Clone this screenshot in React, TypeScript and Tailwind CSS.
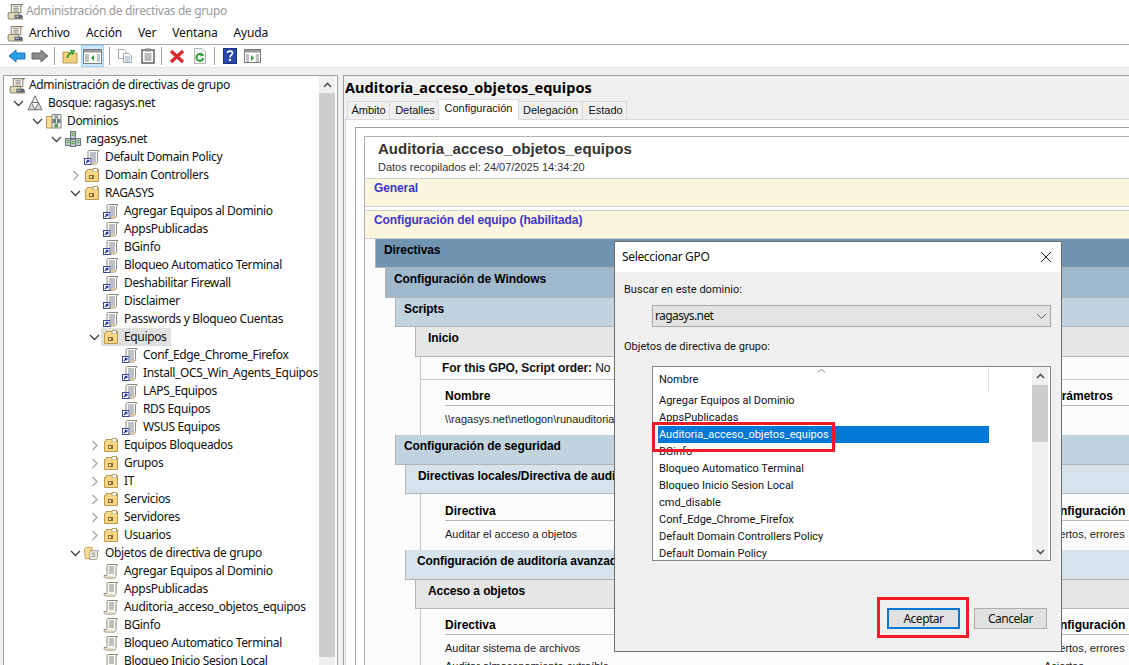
import React from "react";

function GpoLink() {
  return (
    <svg width="16" height="16" viewBox="0 0 16 16" className="shrink-0">
      <path d="M5.5 1.5H15L13.5 3.5V12.5C13.5 14 12.5 15 11.5 15H4V3C4 2 4.5 1.5 5.5 1.5Z" fill="#fdfcf8" stroke="#8d8a7c" />
      <path d="M6 4H12M6 6H12M6 8H12M8 10H12M8 12H12" stroke="#7d8593" />
      <path d="M8 13H13V14.5L11.5 15H8Z" fill="#d8c89a" />
      <rect x="0.5" y="9.5" width="6.5" height="6" fill="#fff" stroke="#3f4a96" />
      <path d="M2 14L4.5 11.5M2.8 11.3H4.8V13.3" stroke="#2433a8" fill="none" strokeWidth="1.2" />
    </svg>
  );
}
function Ou() {
  return (
    <svg width="16" height="16" viewBox="0 0 16 16" className="shrink-0">
      <path d="M1.5 4.5H3V2.5H14.5V14.5H1.5Z" fill="#f8dc90" stroke="#bc9a56" />
      <path d="M9 1.5H13.5V5H9Z" fill="#fff" stroke="#b59a66" />
      <rect x="2" y="5" width="12" height="9" fill="#f6d583" />
      <rect x="5" y="8" width="5" height="4" fill="#8a6a2c" />
      <rect x="6" y="9" width="2" height="2" fill="#f3e3b0" />
    </svg>
  );
}
function Script() {
  return (
    <svg width="16" height="16" viewBox="0 0 16 16" className="shrink-0">
      <path d="M5 1.5H14.5L13 3.5V12.5C13 14 12 15 11 15H2.5C1.5 15 1 14 1 12.5H3.5C4 12 4 11 4 9V3C4 2 4.3 1.5 5 1.5Z" fill="#fbfaf4" stroke="#8b8675" />
      <path d="M6 4H11M6 6H11M6 8H11M6 10H11" stroke="#848484" />
      <path d="M1.5 13H10V14.5H3Z" fill="#e6dcc0" />
    </svg>
  );
}
function Root() {
  return (
    <svg width="17" height="17" viewBox="0 0 16 16" className="shrink-0">
      <path d="M4 1.5H14.5L13 3V9H4Z" fill="#fbf8ea" stroke="#8b8675" />
      <path d="M6 3.5H11M6 5.5H11M6 7.5H11" stroke="#848484" />
      <path d="M1 11C1 9.5 2 9 3 9H11V12.5H14.5V15H2C1.3 15 1 14 1 13Z" fill="#e3d8b4" stroke="#8b8675" />
      <rect x="7" y="11" width="7" height="3.5" fill="#59626e" />
      <rect x="8" y="12" width="3" height="1" fill="#c4d4de" />
    </svg>
  );
}
function Forest() {
  return (
    <svg width="16" height="16" viewBox="0 0 16 16" className="shrink-0">
      <path d="M8 0.8L11.2 7.5H4.8Z" fill="#f3f3f3" stroke="#6f6f6f" />
      <path d="M4.5 7.7L8 14.8H1Z" fill="#d8d8d8" stroke="#6f6f6f" />
      <path d="M11.5 7.7L15 14.8H8Z" fill="#d8d8d8" stroke="#6f6f6f" />
    </svg>
  );
}
function Server({ x, y }: { x: number; y: number }) {
  return (
    <g>
      <rect x={x + 0.5} y={y + 0.5} width="5" height="7" fill="#c3cad0" stroke="#6c7a80" />
      <path d={`M${x + 1.5} ${y + 2.5}H${x + 4.5}M${x + 1.5} ${y + 4.5}H${x + 4.5}`} stroke="#56a24a" />
    </g>
  );
}
function Domain() {
  return (
    <svg width="16" height="16" viewBox="0 0 16 16" className="shrink-0">
      <Server x={5} y={0} />
      <Server x={0} y={7} />
      <Server x={10} y={7} />
      <Server x={5} y={8} />
    </svg>
  );
}
function Dominios() {
  return (
    <svg width="16" height="16" viewBox="0 0 16 16" className="shrink-0">
      <path d="M0.5 3.5H7V15H0.5Z" fill="#f8dc90" stroke="#bc9a56" />
      <path d="M6 1.5H15V15H6Z" fill="#e9e9e3" stroke="#808a8c" />
      <rect x="6.5" y="6" width="3.5" height="4" fill="#6d7b82" />
      <rect x="11" y="6" width="3.5" height="4" fill="#6d7b82" />
      <rect x="8.5" y="10.5" width="3.5" height="4" fill="#5c9c60" />
      <rect x="8.5" y="2.5" width="3.5" height="3" fill="#8c979c" />
    </svg>
  );
}
function GpoFolder() {
  return (
    <svg width="16" height="16" viewBox="0 0 18 16" className="shrink-0">
      <path d="M0.5 3.5L3 1.5H9V14.5H1.5Z" fill="#f8dc90" stroke="#bc9a56" />
      <path d="M7.5 5.5H16.5L15 7V13C15 14 14.5 15 13.5 15H6.5V7C6.5 6 7 5.5 7.5 5.5Z" fill="#fbfaf4" stroke="#8b8675" />
      <path d="M8.5 8H13M8.5 10H13M8.5 12H13" stroke="#848484" />
    </svg>
  );
}

type IconKind = "root" | "forest" | "dominios" | "domain" | "link" | "ou" | "gpofolder" | "script";
type Chev = "down" | "right" | "none";
const icons: Record<IconKind, React.ReactNode> = {
  root: <Root />,
  forest: <Forest />,
  dominios: <Dominios />,
  domain: <Domain />,
  link: <GpoLink />,
  ou: <Ou />,
  gpofolder: <GpoFolder />,
  script: <Script />,
};

const tree: [number, Chev, IconKind, string, boolean?][] = [
  [1, "down", "forest", "Bosque: ragasys.net"],
  [2, "down", "dominios", "Dominios"],
  [3, "down", "domain", "ragasys.net"],
  [4, "none", "link", "Default Domain Policy"],
  [4, "right", "ou", "Domain Controllers"],
  [4, "down", "ou", "RAGASYS"],
  [5, "none", "link", "Agregar Equipos al Dominio"],
  [5, "none", "link", "AppsPublicadas"],
  [5, "none", "link", "BGinfo"],
  [5, "none", "link", "Bloqueo Automatico Terminal"],
  [5, "none", "link", "Deshabilitar Firewall"],
  [5, "none", "link", "Disclaimer"],
  [5, "none", "link", "Passwords y Bloqueo Cuentas"],
  [5, "down", "ou", "Equipos", true],
  [6, "none", "link", "Conf_Edge_Chrome_Firefox"],
  [6, "none", "link", "Install_OCS_Win_Agents_Equipos"],
  [6, "none", "link", "LAPS_Equipos"],
  [6, "none", "link", "RDS Equipos"],
  [6, "none", "link", "WSUS Equipos"],
  [5, "right", "ou", "Equipos Bloqueados"],
  [5, "right", "ou", "Grupos"],
  [5, "right", "ou", "IT"],
  [5, "right", "ou", "Servicios"],
  [5, "right", "ou", "Servidores"],
  [5, "right", "ou", "Usuarios"],
  [4, "down", "gpofolder", "Objetos de directiva de grupo"],
  [5, "none", "script", "Agregar Equipos al Dominio"],
  [5, "none", "script", "AppsPublicadas"],
  [5, "none", "script", "Auditoria_acceso_objetos_equipos"],
  [5, "none", "script", "BGinfo"],
  [5, "none", "script", "Bloqueo Automatico Terminal"],
  [5, "none", "script", "Bloqueo Inicio Sesion Local"],
];

function Chevron({ dir }: { dir: Chev }) {
  if (dir === "none") return <span className="w-[11px] shrink-0" />;
  return (
    <svg width="11" height="11" viewBox="0 0 11 11" className="shrink-0">
      {dir === "down" ? (
        <path d="M1 3L5.5 7.5L10 3" fill="none" stroke="#404040" strokeWidth="1.3" />
      ) : (
        <path d="M3.5 1L8 5.5L3.5 10" fill="none" stroke="#a6a6a6" strokeWidth="1.3" />
      )}
    </svg>
  );
}

function TreeRow({ level, chev, icon, text, sel }: { level: number; chev: Chev; icon: IconKind; text: string; sel?: boolean }) {
  return (
    <div className="h-[18px] flex items-center shrink-0" style={{ paddingLeft: 19 * level - 10 }}>
      <Chevron dir={chev} />
      <span className={sel ? "flex items-center gap-[5px] bg-[#e0e0e0] h-[18px] ml-[1px] pl-[2px] pr-[4px] whitespace-nowrap" : "flex items-center gap-[5px] h-[18px] ml-[1px] pl-[2px] pr-[4px] whitespace-nowrap"}>
        {icons[icon]}
        <span>{text}</span>
      </span>
    </div>
  );
}

function Tool({ children, active }: { children: React.ReactNode; active?: boolean }) {
  return (
    <span className={active ? "w-[23px] h-[22px] flex items-center justify-center bg-[#cce8ff] border border-[#99d1ff]" : "w-[23px] h-[22px] flex items-center justify-center border border-transparent"}>
      {children}
    </span>
  );
}
const Sep = ({ cls }: { cls: string }) => <span className={`w-px h-[18px] bg-[#a0a0a0] ${cls}`} />;

function Band({ cls, label }: { cls: string; label: string }) {
  return <div className={`font-['Liberation_Sans'] font-bold text-[12px] tracking-[-0.1px] leading-[18px] text-black border-b border-l border-[#b4b4b4] whitespace-nowrap ${cls}`}>{label}</div>;
}

function Head({ label, right, col }: { label: string; right: string; col: string }) {
  return (
    <div className={`grid ${col} ml-[24px] border-b border-[#b8b8b8] h-[26px] items-end font-['Liberation_Sans'] font-bold text-[12px] text-black leading-[18px] whitespace-nowrap`}>
      <span>{label}</span>
      <span>{right}</span>
    </div>
  );
}
function Cell({ label, right, cls }: { label: string; right: string; cls: string }) {
  return (
    <div className={`grid grid-cols-[599px_1fr] ml-[24px] pt-[4px] font-['Liberation_Sans'] text-[11px] text-[#1a1a1a] leading-[18px] whitespace-nowrap ${cls}`}>
      <span>{label}</span>
      <span>{right}</span>
    </div>
  );
}

const listItems = [
  "Agregar Equipos al Dominio",
  "AppsPublicadas",
  "Auditoria_acceso_objetos_equipos",
  "BGinfo",
  "Bloqueo Automatico Terminal",
  "Bloqueo Inicio Sesion Local",
  "cmd_disable",
  "Conf_Edge_Chrome_Firefox",
  "Default Domain Controllers Policy",
  "Default Domain Policy",
];

const inactiveTab = "h-[18px] bg-[#f0f0f0] border border-b-0 border-l-0 border-[#d9d9d9] flex items-center justify-center";

export default function App() {
  return (
    <div className="relative w-[1129px] h-[665px] overflow-hidden bg-[#f0f0f0] font-['Noto_Sans',sans-serif] text-[12px] tracking-[-0.35px] text-[#111] flex flex-col">
      {/* title bar */}
      <div className="h-[22px] bg-white flex items-center pl-[7px] gap-[2px] shrink-0">
        <Root />
        <span className="text-[#9a9a9a]">Administración de directivas de grupo</span>
      </div>
      {/* menu */}
      <div className="h-[23px] bg-white border-b border-[#a8a8a8] flex items-center pl-[7px] shrink-0">
        <Root />
        <div className="flex items-center gap-[16px] ml-[5px] tracking-[-0.15px]">
          <span>Archivo</span>
          <span>Acción</span>
          <span>Ver</span>
          <span>Ventana</span>
          <span>Ayuda</span>
        </div>
      </div>
      {/* toolbar */}
      <div className="h-[23px] bg-white border-b border-[#e2e2e2] flex items-center pl-[5px] shrink-0">
        <Tool>
          <svg width="18" height="14" viewBox="0 0 18 14"><path d="M1 7L8 1V4H17V10H8V13Z" fill="#2b9fe8" stroke="#1a78c4" /></svg>
        </Tool>
        <Tool>
          <svg width="18" height="14" viewBox="0 0 18 14"><path d="M17 7L10 1V4H1V10H10V13Z" fill="#8a8a8a" stroke="#666" /></svg>
        </Tool>
        <Sep cls="mx-[3px]" />
        <Tool>
          <svg width="16" height="16" viewBox="0 0 16 16"><path d="M1 4H6L7 5H15V15H1Z" fill="#f2d27c" stroke="#b3924e" /><path d="M5 10C6 7 8 5 10 4M8 2.5L12 3L10 6.5" fill="none" stroke="#2f9c34" strokeWidth="1.6" /></svg>
        </Tool>
        <Tool active>
          <svg width="19" height="15" viewBox="0 0 19 15"><rect x="0.5" y="0.5" width="18" height="14" fill="#fff" stroke="#7b7b7b" /><rect x="1" y="1" width="17" height="2.5" fill="#9a9a9a" /><path d="M2 6H6M2 8H6M2 10H6M2 12H6M14 6H17M14 8H17M14 10H17M14 12H17" stroke="#7c8a90" /><path d="M11 6V12L8 9Z" fill="#2f9c34" /></svg>
        </Tool>
        <Sep cls="ml-[5px] mr-[3px]" />
        <Tool>
          <svg width="16" height="16" viewBox="0 0 16 16"><path d="M1.5 1.5H7L9 3.5V10.5H1.5Z" fill="#fff" stroke="#a8a8a8" /><path d="M6.5 5.5H12L14.5 8V14.5H6.5Z" fill="#fff" stroke="#a8a8a8" /><path d="M8 9H13M8 11H13M8 13H13" stroke="#8ba6c8" /></svg>
        </Tool>
        <Tool>
          <svg width="14" height="16" viewBox="0 0 14 16"><rect x="1" y="2" width="12" height="13" fill="#fff" stroke="#555" strokeWidth="1.4" /><rect x="4" y="0.5" width="6" height="3" fill="#888" /><path d="M3.5 6H10.5M3.5 8H10.5M3.5 10H10.5M3.5 12H10.5" stroke="#777" /></svg>
        </Tool>
        <Sep cls="ml-[2px] mr-[3px]" />
        <Tool>
          <svg width="16" height="15" viewBox="0 0 16 15"><path d="M2 2L14 13M14 2L2 13" stroke="#d9282b" strokeWidth="3.4" /></svg>
        </Tool>
        <Tool>
          <svg width="14" height="16" viewBox="0 0 14 16"><path d="M1.5 0.5H9L12.5 4V15.5H1.5Z" fill="#f4f4f4" stroke="#b3b3b3" /><path d="M10.2 10A3.4 3.4 0 1 1 9.2 7" fill="none" stroke="#2f9c34" strokeWidth="2" /><path d="M8 4.2L11.2 7.4L7.4 8.4Z" fill="#2f9c34" /></svg>
        </Tool>
        <Sep cls="mx-[3px]" />
        <Tool>
          <svg width="14" height="16" viewBox="0 0 14 16"><rect x="0.5" y="0.5" width="13" height="15" fill="#2a47b0" stroke="#1c2f80" /><path d="M4.5 5C4.5 2.5 9.5 2.5 9.5 5C9.5 7 7 7 7 9.5" fill="none" stroke="#fff" strokeWidth="1.6" /><rect x="6" y="11" width="2" height="2" fill="#fff" /></svg>
        </Tool>
        <Tool>
          <svg width="17" height="14" viewBox="0 0 17 14"><rect x="0.5" y="0.5" width="16" height="13" fill="#fff" stroke="#7b7b7b" /><rect x="1" y="1" width="15" height="2.5" fill="#9a9a9a" /><path d="M2 6H5M2 8H5M2 10H5M2 12H5M12 6H15M12 8H15M12 10H15M12 12H15" stroke="#7c8a90" /><path d="M7 6V12L10 9Z" fill="#2f9c34" /></svg>
        </Tool>
      </div>

      {/* panes */}
      <div className="flex-1 min-h-0 flex pt-[7px] pl-[3px] gap-[5px]">
        {/* tree */}
        <div className="w-[335px] shrink-0 bg-white border-l border-t border-r border-[#a0a0a0] flex overflow-hidden">
          <div className="flex-1 min-w-0 overflow-hidden flex flex-col">
            <div className="h-[18px] flex items-center gap-[3px] pl-[5px] shrink-0 whitespace-nowrap">
              <Root />
              <span>Administración de directivas de grupo</span>
            </div>
            {tree.map((r, i) => (
              <TreeRow key={i} level={r[0]} chev={r[1]} icon={r[2]} text={r[3]} sel={r[4]} />
            ))}
          </div>
          <div className="w-[16px] mr-[2px] shrink-0 bg-[#f0f0f0] flex flex-col">
            <div className="h-[17px] flex items-center justify-center">
              <svg width="9" height="6" viewBox="0 0 9 6"><path d="M1 5L4.5 1.5L8 5" fill="none" stroke="#555" strokeWidth="1.6" /></svg>
            </div>
            <div className="h-[564px] bg-[#cdcdcd]" />
          </div>
        </div>

        {/* details */}
        <div className="flex-1 min-w-0 border-l border-t border-[#a0a0a0] flex flex-col overflow-hidden">
          <div className="h-[24px] flex items-center pl-[1px] shrink-0 font-bold text-[14.5px] tracking-[0.05px] text-black whitespace-nowrap">
            Auditoria_acceso_objetos_equipos
          </div>
          {/* tabs */}
          <div className="h-[19px] flex items-end pl-[3px] shrink-0 relative font-['Liberation_Sans'] text-[11px] tracking-[0px]">
            <span className="w-[43px] h-[18px] bg-[#f0f0f0] border border-b-0 border-[#d9d9d9] flex items-center justify-center">Ámbito</span>
            <span className={`w-[49px] pl-[2px] ${inactiveTab}`}>Detalles</span>
            <span className="w-[80px] h-[21px] bg-white border border-b-0 border-l-0 border-[#d9d9d9] flex items-center justify-center pb-[3px] z-10 -mb-px">Configuración</span>
            <span className={`w-[64px] ${inactiveTab}`}>Delegación</span>
            <span className={`w-[44px] pl-[2px] ${inactiveTab}`}>Estado</span>
          </div>
          {/* tab panel */}
          <div className="flex-1 min-h-0 bg-white border-l border-t border-[#d9d9d9] ml-[1px] pl-[9px] pt-[7px] overflow-hidden">
            <div className="h-[600px] border-l border-t border-[#a0a0a0] pl-[8px] pt-[8px] bg-white">
              <div className="border-l border-t border-[#b0b0b0] h-[600px] bg-[#fcfcfc] tracking-normal">
                <div className="h-[41px] bg-white pl-[13px] pt-[1px] text-[#333]">
                  <div className="font-['Liberation_Sans'] font-bold text-[15px] tracking-[0.04px] leading-[21px] whitespace-nowrap">Auditoria_acceso_objetos_equipos</div>
                  <div className="font-['Liberation_Sans'] text-[11px] leading-[16px] text-[#333] whitespace-nowrap">Datos recopilados el: 24/07/2025 14:34:20</div>
                </div>
                <div className="h-[29px] bg-[#fcf6de] border-b border-t border-[#d0d0d0] pl-[9px] font-['Liberation_Sans'] font-bold text-[12px] tracking-[-0.1px] leading-[18px] text-[#3c35cc]">General</div>
                <div className="h-[3px] bg-white" />
                <div className="h-[29px] bg-[#fcf6de] border-b border-t border-[#d0d0d0] pl-[9px] font-['Liberation_Sans'] font-bold text-[12px] tracking-[-0.1px] leading-[18px] text-[#3c35cc]">Configuración del equipo (habilitada)</div>
                <Band cls="ml-[10px] h-[29px] pt-[2px] pl-[8px] bg-[#7095b3]" label="Directivas" />
                <Band cls="ml-[20px] h-[30px] pt-[2px] pl-[8px] bg-[#a0b8cc]" label="Configuración de Windows" />
                <Band cls="ml-[30px] h-[29px] pt-[2px] pl-[8px] bg-[#c0d3df]" label="Scripts" />
                <Band cls="ml-[50px] h-[30px] pt-[2px] pl-[12px] bg-[#e6e6e6]" label="Inicio" />
                <div className="ml-[55px] h-[78px] border-l border-[#c4c4c4]">
                  <div className="h-[23px] border-b border-[#c8c8c8] pl-[21px] flex items-center font-['Liberation_Sans'] text-[12px] tracking-[-0.1px] whitespace-nowrap">
                    <b>For this GPO, Script order:</b>&nbsp;No configurado
                  </div>
                  <Head label="Nombre" right="Parámetros" col="grid-cols-[602px_1fr]" />
                  <Cell label="\\ragasys.net\netlogon\runauditoria" right="" cls="h-[26px]" />
                </div>
                <Band cls="ml-[30px] h-[30px] pt-[2px] pl-[8px] bg-[#c0d3df]" label="Configuración de seguridad" />
                <Band cls="ml-[40px] h-[29px] pt-[2px] pl-[12px] bg-[#d6e3ec]" label="Directivas locales/Directiva de auditoría" />
                <div className="ml-[55px] h-[56px] border-l border-[#c4c4c4] pt-[1px]">
                  <Head label="Directiva" right="Configuración" col="grid-cols-[599px_1fr]" />
                  <Cell label="Auditar el acceso a objetos" right="Aciertos, errores" cls="h-[26px]" />
                </div>
                <Band cls="ml-[40px] h-[30px] pt-[2px] pl-[11px] bg-[#d6e3ec]" label="Configuración de auditoría avanzada" />
                <Band cls="ml-[50px] h-[29px] pt-[2px] pl-[12px] bg-[#e6e6e6]" label="Acceso a objetos" />
                <div className="ml-[55px] border-l border-[#c4c4c4]">
                  <Head label="Directiva" right="Configuración" col="grid-cols-[599px_1fr]" />
                  <Cell label="Auditar sistema de archivos" right="Aciertos, errores" cls="h-[18px]" />
                  <Cell label="Auditar almacenamiento extraíble" right="Aciertos" cls="h-[18px]" />
                </div>
              </div>
            </div>
          </div>
        </div>
      </div>

      {/* dialog */}
      <div className="absolute left-[614px] top-[241px] w-[448px] h-[411px] bg-[#f0f0f0] border border-[#6e6e6e] flex flex-col">
        <div className="h-[30px] bg-white flex items-center justify-between pl-[7px] pr-[9px] shrink-0">
          <span>Seleccionar GPO</span>
          <svg width="12" height="12" viewBox="0 0 12 12"><path d="M1 1L11 11M11 1L1 11" stroke="#222" strokeWidth="1" /></svg>
        </div>
        <div className="pl-[9px] pt-[9px] leading-[18px] font-['Roboto',sans-serif] text-[11px] tracking-[0.02px]">Buscar en este dominio:</div>
        <div className="ml-[37px] mt-[6px] w-[399px] h-[22px] bg-[#e3e3e3] border border-[#a8a8a8] flex items-center justify-between pl-[2px] pr-[3px]">
          <span className="tracking-[-0.6px]">ragasys.net</span>
          <svg width="11" height="7" viewBox="0 0 11 7"><path d="M1 1L5.5 5.5L10 1" fill="none" stroke="#666" /></svg>
        </div>
        <div className="pl-[9px] pt-[11px] leading-[18px] font-['Roboto',sans-serif] text-[11px] tracking-[0.02px]">Objetos de directiva de grupo:</div>
        <div className="ml-[37px] mt-[10px] w-[399px] h-[195px] bg-white border border-[#828790] flex overflow-hidden font-['Roboto',sans-serif] text-[11px] tracking-[0px]">
          <div className="flex-1 min-w-0 flex flex-col overflow-hidden">
            <div className="h-[25px] shrink-0 w-[336px] border-r border-[#e5e5e5] relative pl-[6px] pt-[4px] leading-[18px]">
              <span>Nombre</span>
              <svg width="9" height="5" viewBox="0 0 9 5" className="absolute left-[164px] top-[1px]"><path d="M1 4.5L4.5 1L8 4.5" fill="none" stroke="#888" /></svg>
            </div>
            <div>
              {listItems.map((t, i) => (
                <div key={t} className={i === 2 ? "h-[17px] w-[331px] ml-[5px] pl-[1px] leading-[17px] bg-[#0078d7] text-white whitespace-nowrap" : "h-[17px] w-[331px] ml-[5px] pl-[1px] leading-[17px] whitespace-nowrap"}>{t}</div>
              ))}
            </div>
          </div>
          <div className="w-[16px] mr-[2px] shrink-0 bg-[#f0f0f0] flex flex-col items-center">
            <div className="h-[18px] flex items-center justify-center w-full">
              <svg width="9" height="6" viewBox="0 0 9 6"><path d="M1 5L4.5 1.5L8 5" fill="none" stroke="#555" strokeWidth="1.6" /></svg>
            </div>
            <div className="h-[57px] w-full bg-[#cdcdcd]" />
            <div className="flex-1" />
            <div className="h-[16px] flex items-center justify-center w-full">
              <svg width="9" height="6" viewBox="0 0 9 6"><path d="M1 1L4.5 4.5L8 1" fill="none" stroke="#555" strokeWidth="1.6" /></svg>
            </div>
          </div>
        </div>
        <div className="flex-1" />
        <div className="flex justify-end gap-[14px] pr-[14px] pb-[22px] tracking-[-0.5px]">
          <div className="w-[73px] h-[21px] bg-[#e1e1e1] border-2 border-[#0078d7] flex items-center justify-center">Aceptar</div>
          <div className="w-[73px] h-[21px] bg-[#e1e1e1] border border-[#adadad] flex items-center justify-center">Cancelar</div>
        </div>
      </div>

      {/* red annotations */}
      <div className="absolute left-[652px] top-[422px] w-[183px] h-[30px] border-[3px] border-[#ed1c24]" />
      <div className="absolute left-[877px] top-[597px] w-[92px] h-[41px] border-[3px] border-[#ed1c24]" />
    </div>
  );
}
